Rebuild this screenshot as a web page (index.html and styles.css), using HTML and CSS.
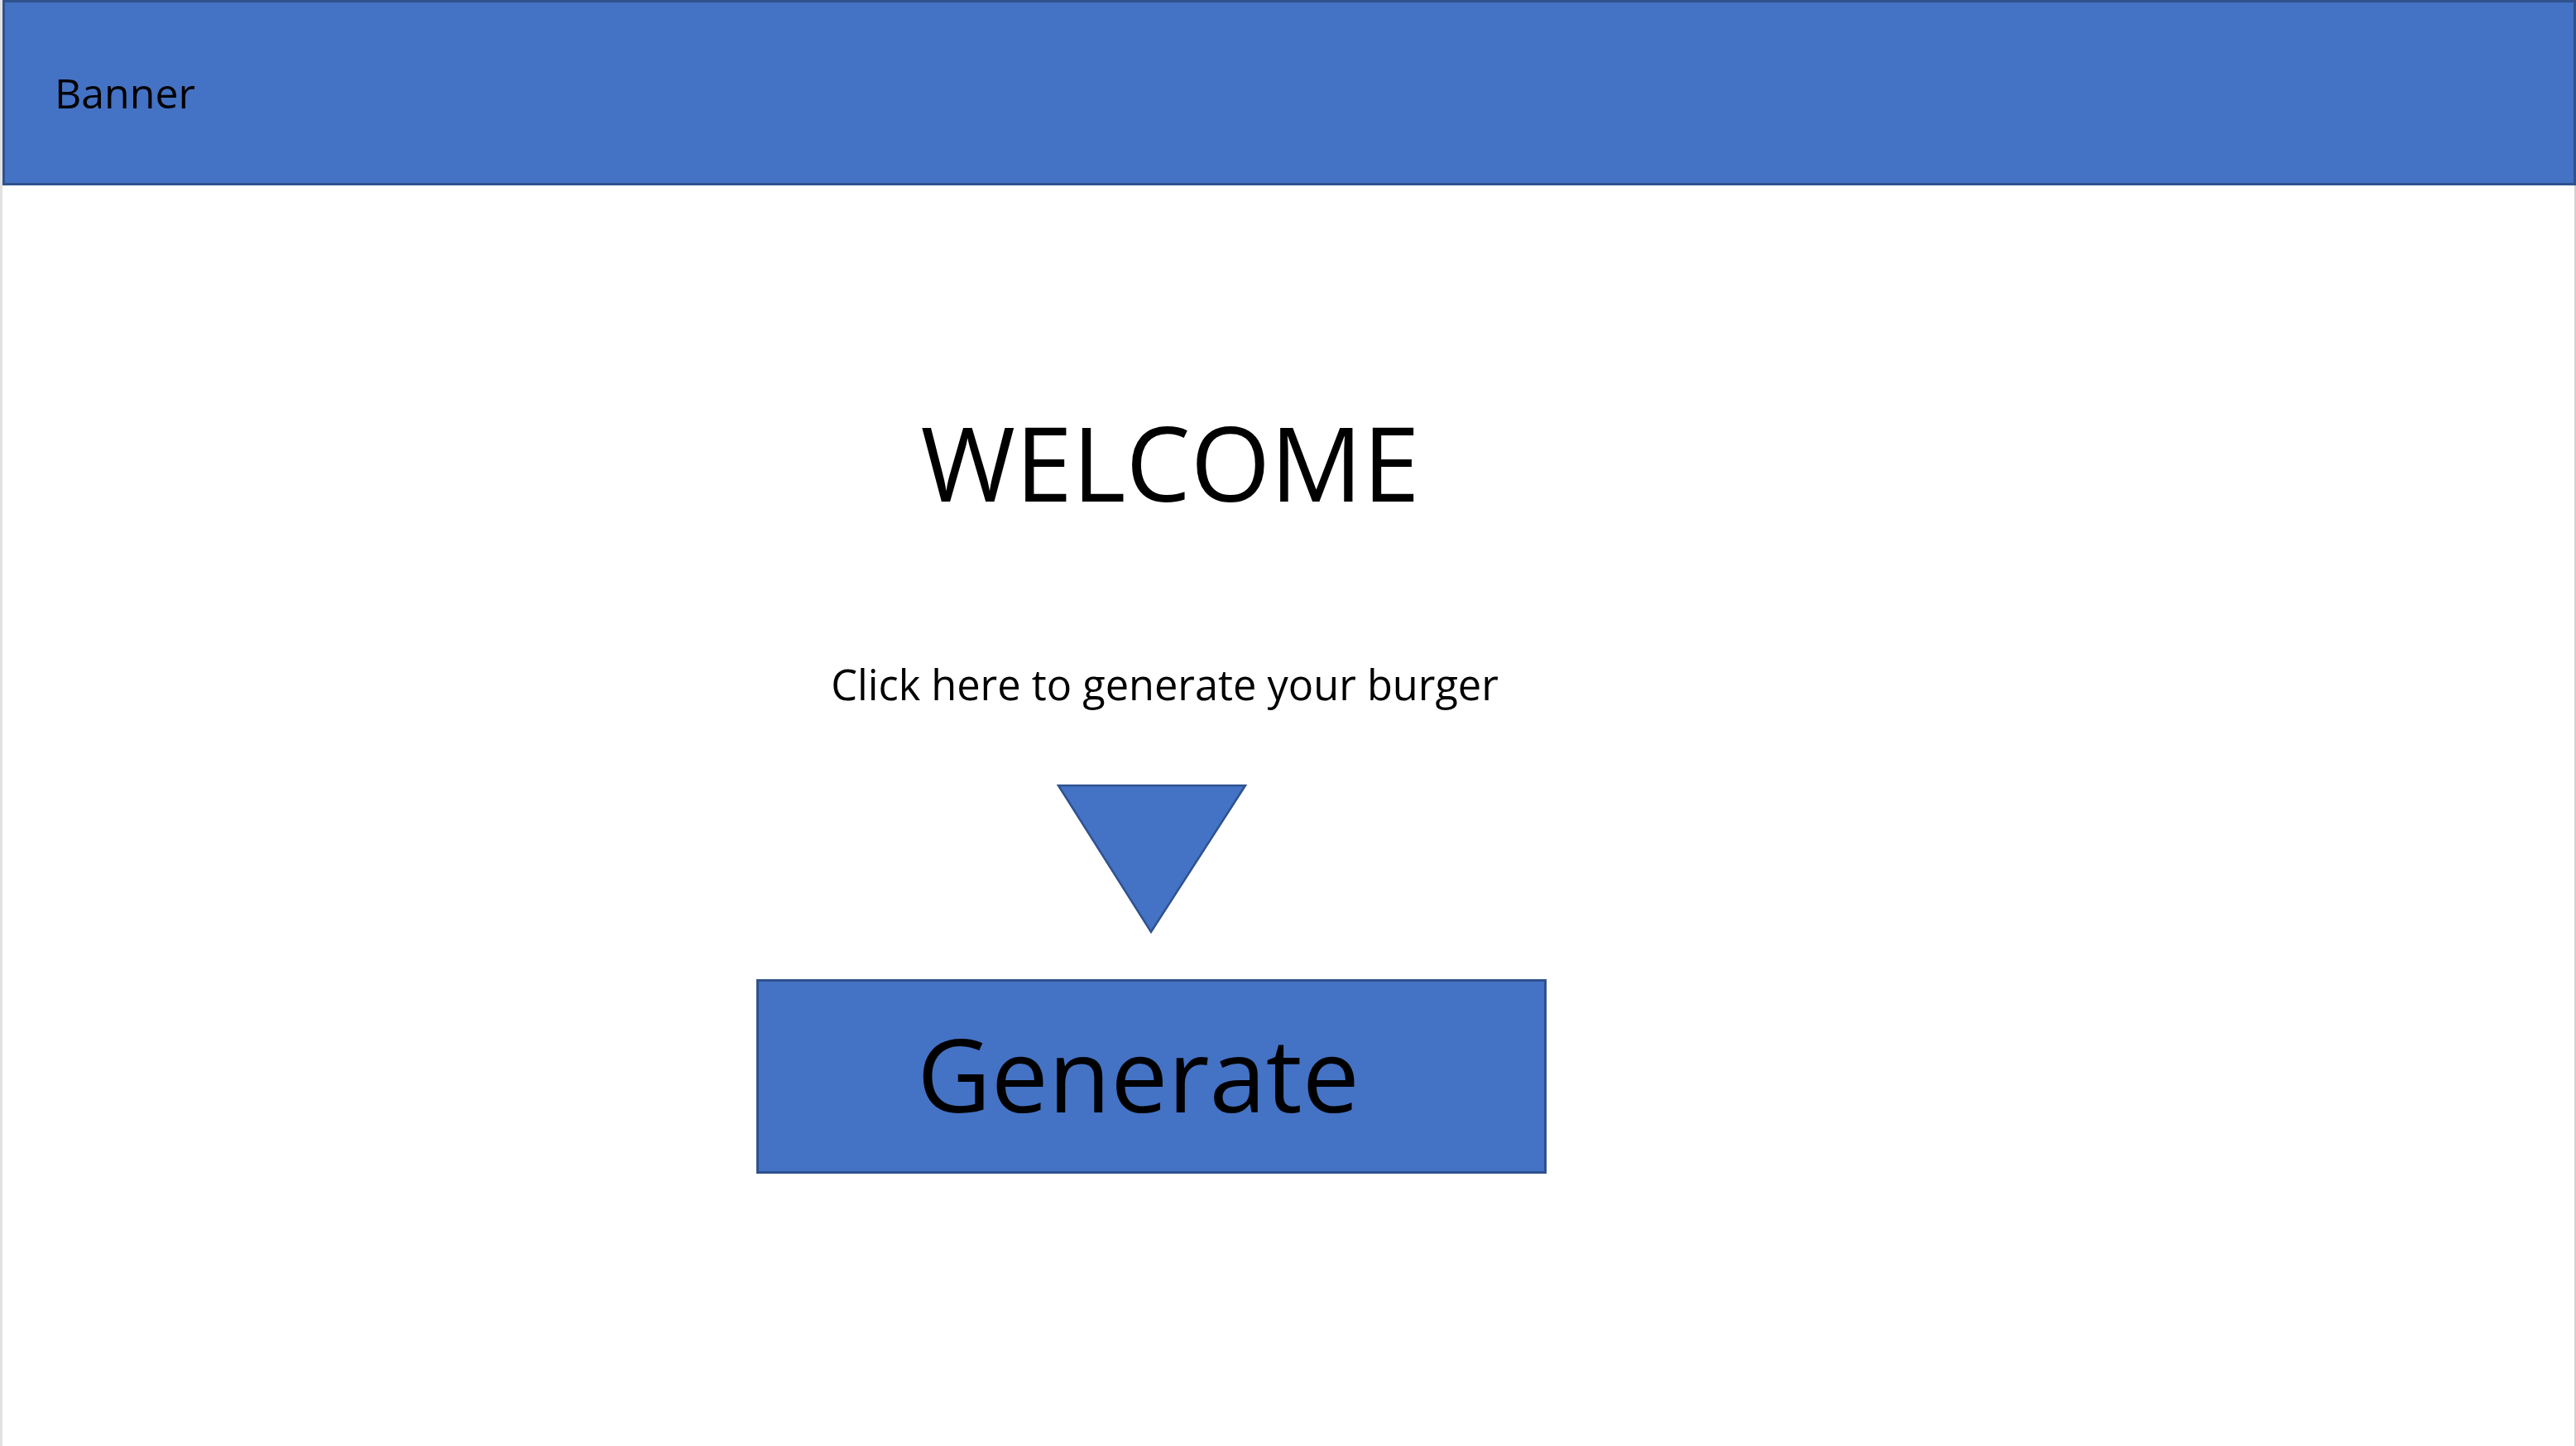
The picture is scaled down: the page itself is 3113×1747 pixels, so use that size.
FILE: index.html
```html
<!DOCTYPE html>
<html lang="en">
<head>
<meta charset="utf-8">
<title>Burger Generator</title>
<link rel="stylesheet" href="styles.css">
</head>
<body>
<div class="app">
  <header class="banner">
    <span class="banner-title">Banner</span>
  </header>
  <main class="main">
    <section class="stage">
      <h1 class="welcome">WELCOME</h1>
      <p class="hint">Click here to generate your burger</p>
      <svg class="arrow" width="230" height="182" viewBox="0 0 230 182" aria-hidden="true">
        <polygon points="2,2 228,2 114,179" fill="#4472c4" stroke="#2f528f" stroke-width="2.5" stroke-linejoin="miter"/>
      </svg>
      <button class="generate" type="button">Generate</button>
    </section>
  </main>
</div>
</body>
</html>
```
FILE: styles.css
```css
html, body {
  margin: 0;
  padding: 0;
  background: #ffffff;
}

body {
  font-family: "Open Sans", "Liberation Sans", sans-serif;
  color: #000000;
}

.app {
  min-height: 100vh;
  display: flex;
  flex-direction: column;
  border-left: 3px solid #e2e2e2;
  box-sizing: border-box;
}

.banner {
  height: 224px;
  box-sizing: border-box;
  background: #4472c4;
  border: 3px solid #2f528f;
  display: flex;
  align-items: center;
  padding-left: 60px;
}

.banner-title {
  font-size: 50px;
  line-height: 1;
}

.main {
  flex: 1;
  border-right: 2px solid #d0d0d0;
}

.stage {
  width: 955px;
  margin-left: 911px;
  display: flex;
  flex-direction: column;
  align-items: center;
}

.welcome {
  margin: 272px 0 0;
  padding-left: 45px;
  font-size: 124px;
  line-height: 1;
  font-weight: 400;
  text-align: center;
}

.hint {
  margin: 182px 0 0;
  padding-left: 32px;
  font-size: 50.5px;
  line-height: 1;
  text-align: center;
}

.arrow {
  display: block;
  margin-top: 94px;
}

.generate {
  margin-top: 54px;
  width: 955px;
  height: 235px;
  box-sizing: border-box;
  background: #4472c4;
  border: 3px solid #2f528f;
  display: flex;
  align-items: center;
  justify-content: center;
  padding: 0 32px 8px 0;
  font-family: "Open Sans", "Liberation Sans", sans-serif;
  font-size: 123px;
  line-height: 1;
  color: #000000;
  cursor: pointer;
}
```
